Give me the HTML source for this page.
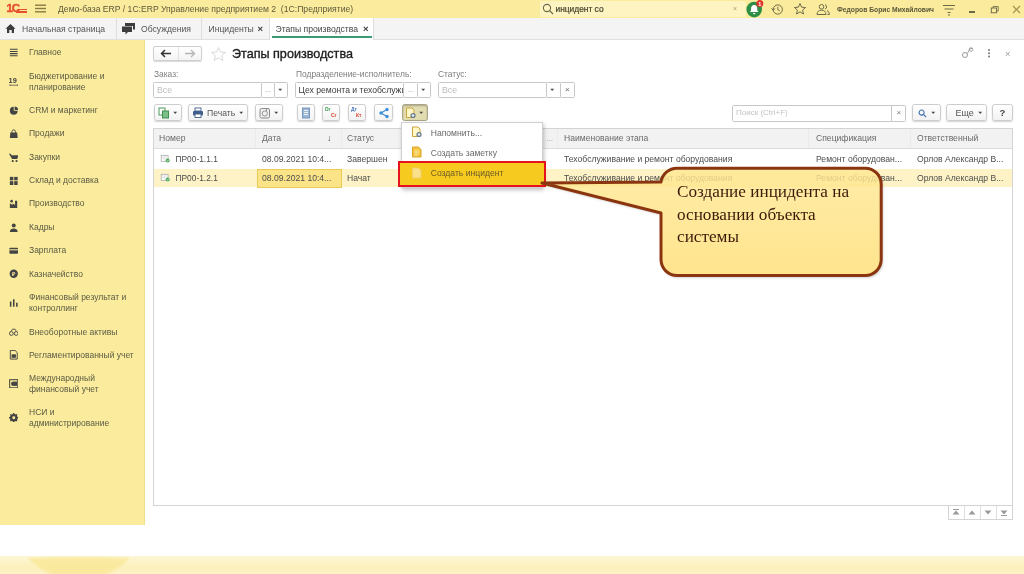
<!DOCTYPE html>
<html lang="ru">
<head>
<meta charset="utf-8">
<title>Этапы производства</title>
<style>
*{box-sizing:border-box;margin:0;padding:0}
html,body{width:1024px;height:574px;overflow:hidden;background:#fff}
body{position:relative;font-family:"Liberation Sans",sans-serif;font-size:9px;color:#4a4a4a;filter:blur(0.55px)}
.a{position:absolute;white-space:nowrap}
#titlebar{left:0;top:0;width:1024px;height:18px;background:#fbec9d}
#tabbar{left:0;top:18px;width:1024px;height:22px;background:#f4f4f4;border-bottom:1px solid #e0e0e0}
#sidebar{left:0;top:40px;width:145px;height:485px;background:#faec9c;border-right:1px solid #eedf8a}
#leftline{left:150px;top:40px;width:1px;height:484px;background:#e4e4e4}
#footer{left:0;top:555.5px;width:1024px;height:19px;background:linear-gradient(#fdf6d6,#fcf0bc 60%,#fdf3c8)}
.t{font-size:9px;color:#555}
.sb{font-size:8.5px;color:#5b5a45;line-height:11.2px;left:29px;margin-top:1.6px}
.ic{left:8.5px;width:9.5px;height:9.5px;margin-top:1.8px}
.btn{border:1px solid #cdcdcd;border-radius:2.5px;background:linear-gradient(#fff,#f3f3f3);box-shadow:0 1px 1.5px rgba(0,0,0,.18);height:17px;top:104px}
.inp{border:1px solid #c8c8c8;background:#fff;height:16.5px;top:81.5px;font-size:8.8px;line-height:14.5px;border-radius:1.5px;padding-left:3px;color:#bdbdbd}
.lbl{font-size:8.4px;color:#7d7d7d;top:69px}
.th{font-size:8.6px;color:#6a6a6a;top:133px}
.td{font-size:8.6px;color:#4d4d4d}
.sep{width:1px;background:#dedede}
.hs{background:#ebebeb}
.car{font-size:6.5px;color:#4a4a4a;line-height:6px;transform:scaleY(.62);margin-left:-1px}
</style>
</head>
<body>
<!-- title bar -->
<div class="a" id="titlebar"></div>
<div class="a" id="tabbar"></div>
<div class="a" id="sidebar"></div>
<div class="a" id="footer"></div>
<svg class="a" style="left:0;top:555.5px" width="260" height="19" viewBox="0 0 260 19"><defs><filter id="fb"><feGaussianBlur stdDeviation="1.2"/></filter></defs><path d="M28 2 Q78 0 130 2 Q118 14 104 19 L52 19 Q38 12 28 2Z" fill="#f9e68c" opacity=".65" filter="url(#fb)"/></svg>

<!-- logo -->
<div class="a" style="left:6.5px;top:1.5px;font-size:11.5px;font-weight:bold;color:#e5502f;letter-spacing:-1.2px;line-height:13px;-webkit-text-stroke:.5px #e5502f">1С</div>
<div class="a" style="left:17px;top:9.2px;width:9.5px;height:1.2px;background:#e5502f"></div>
<div class="a" style="left:16px;top:11.3px;width:10.5px;height:1.3px;background:#e5502f"></div>
<svg class="a" style="left:34.5px;top:3.5px" width="12" height="10" viewBox="0 0 12 10"><rect x="0" y=".5" width="11" height="1.4" fill="#857a42"/><rect x="0" y="3.8" width="11" height="1.4" fill="#857a42"/><rect x="0" y="7.1" width="11" height="1.4" fill="#857a42"/></svg>
<div class="a t" style="left:58px;top:3px;color:#5e5a3c;font-size:8.65px;line-height:12px">Демо-база ERP / 1С:ERP Управление предприятием 2&nbsp; (1С:Предприятие)</div>

<!-- title right -->
<div class="a" style="left:540px;top:1px;width:206px;height:16px;background:#fdf4c2;border-radius:2px"></div>
<svg class="a" style="left:541.5px;top:3px" width="12" height="12" viewBox="0 0 12 12"><circle cx="5" cy="5" r="3.6" fill="none" stroke="#6d6a4a" stroke-width="1.1"/><path d="M7.6 7.6L11 11" stroke="#6d6a4a" stroke-width="1.3"/></svg>
<div class="a" style="left:555.5px;top:3px;font-size:8.4px;line-height:12px;color:#45432e;-webkit-text-stroke:.2px #45432e">инцидент со</div>
<div class="a" style="left:733px;top:3px;font-size:7px;line-height:12px;color:#a59d6a">×</div>
<svg class="a" style="left:744px;top:0" width="24" height="19" viewBox="0 0 24 19"><circle cx="10.2" cy="9.6" r="7.8" fill="#2f8f46"/><path d="M10.2 5c-2.1 0-3.1 1.6-3.1 3.4v2.2l-1.2 1.5h8.6l-1.2-1.5v-2.2c0-1.8-1-3.4-3.1-3.4zM9 13a1.2 1.2 0 0 0 2.4 0z" fill="#fff"/><circle cx="15.8" cy="3.6" r="3.5" fill="#e0342b"/><text x="15.8" y="5.6" font-size="5.5" font-family="Liberation Sans, sans-serif" font-weight="bold" fill="#fff" text-anchor="middle">1</text></svg>
<svg class="a" style="left:771px;top:3px" width="13" height="13" viewBox="0 0 13 13"><circle cx="6.8" cy="6.5" r="4.6" fill="none" stroke="#6d6a4a" stroke-width="1"/><path d="M6.8 3.8V6.7L8.8 7.9" fill="none" stroke="#6d6a4a" stroke-width="1"/><path d="M0.6 5.2L2.2 7.4L4 5.4" fill="none" stroke="#6d6a4a" stroke-width="1"/></svg>
<svg class="a" style="left:793px;top:2px" width="14" height="14" viewBox="0 0 14 14"><path d="M7 1.5L8.6 5.2L12.6 5.5L9.6 8.1L10.5 12L7 9.9L3.5 12L4.4 8.1L1.4 5.5L5.4 5.2Z" fill="none" stroke="#6d6a4a" stroke-width="1" stroke-linejoin="round"/></svg>
<svg class="a" style="left:816px;top:3px" width="14" height="13" viewBox="0 0 14 13"><circle cx="5.5" cy="3.8" r="2.3" fill="none" stroke="#6d6a4a" stroke-width="1"/><path d="M1 11.5c0-3 2-4.3 4.5-4.3s4.5 1.3 4.5 4.3z" fill="none" stroke="#6d6a4a" stroke-width="1"/><path d="M9 1.6a2.3 2.3 0 0 1 0 4.4M11 7.6c1.5.6 2.3 1.9 2.3 3.9h-1.8" fill="none" stroke="#6d6a4a" stroke-width="1"/></svg>
<div class="a" style="left:837px;top:4px;font-size:6.75px;line-height:11px;color:#5a573a;font-weight:bold">Федоров Борис Михайлович</div>
<svg class="a" style="left:942px;top:3px" width="14" height="13" viewBox="0 0 14 13"><path d="M1 2.5H13M2.5 6H11.5M5.5 9.5H8.5" stroke="#6d6a4a" stroke-width="1.2"/><path d="M5.5 11.5L7 13L8.5 11.5z" fill="#6d6a4a"/></svg>
<div class="a" style="left:968.5px;top:11px;width:6.5px;height:1.5px;background:#6d6a4a"></div>
<svg class="a" style="left:989.5px;top:4.5px" width="9.5" height="9.5" viewBox="0 0 11 11"><rect x="1.5" y="3.5" width="6" height="5.5" fill="none" stroke="#6d6a4a" stroke-width="1.1"/><path d="M3.5 3.5V1.8H9.5V7H7.5" fill="none" stroke="#6d6a4a" stroke-width="1"/></svg>
<svg class="a" style="left:1011.5px;top:4.5px" width="9" height="9" viewBox="0 0 9 9"><path d="M1 1L8 8M8 1L1 8" stroke="#a08f4e" stroke-width="1.1"/></svg>

<!-- tab bar -->
<svg class="a" style="left:5px;top:23px" width="11" height="11" viewBox="0 0 11 11"><path d="M5.5 1L10.5 5.8H9V10H6.7V7H4.3V10H2V5.8H.5Z" fill="#3d3d3d"/></svg>
<div class="a" style="left:22px;top:23px;font-size:8.6px;line-height:12px;color:#555">Начальная страница</div>
<div class="a sep" style="left:116px;top:18px;height:21px"></div>
<svg class="a" style="left:121px;top:22px" width="15" height="13" viewBox="0 0 15 13"><path d="M4 1H14V7.5H12V4H4Z" fill="#3d3d3d"/><path d="M1 4.5H11V10H7L4.5 12.5V10H1Z" fill="#3d3d3d"/></svg>
<div class="a" style="left:141px;top:23px;font-size:8.6px;line-height:12px;color:#555">Обсуждения</div>
<div class="a sep" style="left:201px;top:18px;height:21px"></div>
<div class="a" style="left:208.5px;top:23px;font-size:8.6px;line-height:12px;color:#555">Инциденты</div>
<div class="a" style="left:257.5px;top:22.5px;font-size:9.5px;line-height:12px;color:#3a3a3a;font-weight:bold">×</div>
<div class="a" style="left:269px;top:18px;width:105px;height:22px;background:#fff;border-left:1px solid #dedede;border-right:1px solid #dedede"></div>
<div class="a" style="left:271.5px;top:36.3px;width:100px;height:1.7px;background:#3a9a74"></div>
<div class="a" style="left:275.5px;top:23px;font-size:8.6px;line-height:12px;color:#444">Этапы производства</div>
<div class="a" style="left:363px;top:22.5px;font-size:9.5px;line-height:12px;color:#3a3a3a;font-weight:bold">×</div>

<!-- sidebar -->
<svg class="a ic" style="top:46px" viewBox="0 0 11 11"><path d="M1 1.5H10M1 4H10M1 6.5H10M1 9H10" stroke="#444" stroke-width="1.3"/></svg>
<div class="a sb" style="top:45.8px">Главное</div>
<svg class="a ic" style="top:75px" viewBox="0 0 11 11"><text x="-0.5" y="7.5" font-size="8.5" font-weight="bold" font-family="Liberation Sans, sans-serif" fill="#444">19</text><path d="M1 9.5H10M1 8.5V10.5M10 8.5V10.5" stroke="#444" stroke-width=".8"/></svg>
<div class="a sb" style="top:69.0px">Бюджетирование и<br>планирование</div>
<svg class="a ic" style="top:104px" viewBox="0 0 11 11"><path d="M5.5 1A4.5 4.5 0 1 0 10 5.5H5.5Z" fill="#444"/><path d="M6.5 0.5A4 4 0 0 1 10.5 4.5H6.5Z" fill="#444"/></svg>
<div class="a sb" style="top:103.8px">CRM и маркетинг</div>
<svg class="a ic" style="top:127px" viewBox="0 0 11 11"><path d="M1.5 4H9.5L10 10.5H1Z" fill="#444"/><path d="M3.5 4.5V3A2 2 0 0 1 7.5 3V4.5" fill="none" stroke="#444" stroke-width="1"/></svg>
<div class="a sb" style="top:126.8px">Продажи</div>
<svg class="a ic" style="top:151px" viewBox="0 0 11 11"><path d="M0 1H2L3 2.5H11L9.5 7H3.5Z" fill="#444"/><circle cx="4.3" cy="9.3" r="1.2" fill="#444"/><circle cx="8.7" cy="9.3" r="1.2" fill="#444"/></svg>
<div class="a sb" style="top:150.8px">Закупки</div>
<svg class="a ic" style="top:174px" viewBox="0 0 11 11"><rect x="1" y="1" width="4" height="4" fill="#444"/><rect x="6" y="1" width="4" height="4" fill="#444"/><rect x="1" y="6" width="4" height="4.5" fill="#444"/><rect x="6" y="6" width="4" height="4.5" fill="#444"/></svg>
<div class="a sb" style="top:173.8px">Склад и доставка</div>
<svg class="a ic" style="top:197px" viewBox="0 0 11 11"><path d="M1 10.5V5L4 7V5L7 7V2H9.5V10.5Z" fill="#444"/><circle cx="3" cy="2.5" r="1.5" fill="#444"/></svg>
<div class="a sb" style="top:196.8px">Производство</div>
<svg class="a ic" style="top:221px" viewBox="0 0 11 11"><circle cx="5.5" cy="3" r="2.3" fill="#444"/><path d="M1 10.5C1 7.5 3 6.5 5.5 6.5S10 7.5 10 10.5Z" fill="#444"/></svg>
<div class="a sb" style="top:220.8px">Кадры</div>
<svg class="a ic" style="top:244px" viewBox="0 0 11 11"><rect x="0.5" y="2" width="10" height="7" rx="1" fill="#444"/><rect x="0.5" y="3.8" width="10" height="1.2" fill="#faec9c"/></svg>
<div class="a sb" style="top:243.8px">Зарплата</div>
<svg class="a ic" style="top:267.5px" viewBox="0 0 11 11"><circle cx="5.5" cy="5.5" r="4.8" fill="#444"/><text x="5.5" y="8" font-size="6.5" font-weight="bold" text-anchor="middle" font-family="Liberation Sans, sans-serif" fill="#faec9c">₽</text></svg>
<div class="a sb" style="top:267.3px">Казначейство</div>
<svg class="a ic" style="top:296px" viewBox="0 0 11 11"><path d="M1 10V4H2.8V10ZM4.6 10V1.5H6.4V10ZM8.2 10V5.5H10V10Z" fill="#444"/></svg>
<div class="a sb" style="top:290.0px">Финансовый результат и<br>контроллинг</div>
<svg class="a ic" style="top:325.5px" viewBox="0 0 11 11"><circle cx="2.7" cy="7.5" r="2.2" fill="none" stroke="#444" stroke-width="1.1"/><circle cx="8.3" cy="7.5" r="2.2" fill="none" stroke="#444" stroke-width="1.1"/><path d="M2.5 5L4 2.5H7L8.5 5" fill="none" stroke="#444" stroke-width="1"/></svg>
<div class="a sb" style="top:325.3px">Внеоборотные активы</div>
<svg class="a ic" style="top:348.5px" viewBox="0 0 11 11"><path d="M1.5 0.5H7L9.5 3V10.5H1.5Z" fill="none" stroke="#444" stroke-width="1.1"/><rect x="3" y="5" width="5" height="4" fill="#444"/></svg>
<div class="a sb" style="top:348.3px">Регламентированный учет</div>
<svg class="a ic" style="top:377px" viewBox="0 0 11 11"><rect x="0.8" y="0.8" width="9.4" height="9.4" fill="none" stroke="#444" stroke-width="1.2"/><circle cx="5" cy="5.5" r="2.6" fill="#444"/><path d="M6 3H9.5V8H6" fill="#444"/></svg>
<div class="a sb" style="top:371.0px">Международный<br>финансовый учет</div>
<svg class="a ic" style="top:411px" viewBox="0 0 11 11"><circle cx="5.5" cy="5.5" r="3.3" fill="none" stroke="#444" stroke-width="2.2"/><path d="M5.5 0V11M0 5.5H11M1.6 1.6L9.4 9.4M9.4 1.6L1.6 9.4" stroke="#444" stroke-width="1.6"/><circle cx="5.5" cy="5.5" r="1.7" fill="#faec9c"/></svg>
<div class="a sb" style="top:405.0px">НСИ и<br>администрирование</div>

<!-- form header -->
<div class="a" style="left:153px;top:45.5px;width:49px;height:15.5px;border:1px solid #cfcfcf;border-radius:2px;background:linear-gradient(#fff,#f4f4f4);box-shadow:0 1px 1px rgba(0,0,0,.15)"></div>
<div class="a" style="left:178px;top:47px;width:1px;height:13px;background:#e2e2e2"></div>
<svg class="a" style="left:160px;top:49px" width="12" height="9" viewBox="0 0 12 9"><path d="M11 4.5H2M5 1L1.5 4.5L5 8" fill="none" stroke="#333" stroke-width="1.5"/></svg>
<svg class="a" style="left:184px;top:49px" width="12" height="9" viewBox="0 0 12 9"><path d="M1 4.5H10M7 1L10.5 4.5L7 8" fill="none" stroke="#b5b5b5" stroke-width="1.3"/></svg>
<svg class="a" style="left:209.5px;top:45.5px" width="17" height="16" viewBox="0 0 17 16"><path d="M8.5 1.5L10.5 6L15.5 6.4L11.7 9.6L12.9 14.5L8.5 11.9L4.1 14.5L5.3 9.6L1.5 6.4L6.5 6Z" fill="none" stroke="#d9d9d9" stroke-width="1" stroke-linejoin="round"/></svg>
<div class="a" id="ttl" style="left:232px;top:44.8px;font-size:12.6px;line-height:18px;color:#1c1c1c;-webkit-text-stroke:.35px #1c1c1c">Этапы производства</div>
<svg class="a" style="left:961px;top:46px" width="13" height="13" viewBox="0 0 13 13"><circle cx="4" cy="9" r="2.5" fill="none" stroke="#999" stroke-width="1"/><path d="M6 7.5C8 6 8 2 11 2.5" fill="none" stroke="#999" stroke-width="1"/><circle cx="10" cy="3.5" r="1.8" fill="none" stroke="#999" stroke-width=".9"/></svg>
<div class="a" style="left:987.5px;top:49px;width:2px;height:2px;background:#777;box-shadow:0 3.3px 0 #777,0 6.6px 0 #777;border-radius:1px"></div>
<div class="a" style="left:1005px;top:47.5px;font-size:9.5px;line-height:12px;color:#999">×</div>

<!-- filters -->
<div class="a lbl" style="left:154px">Заказ:</div>
<div class="a lbl" style="left:296px">Подразделение-исполнитель:</div>
<div class="a lbl" style="left:438px">Статус:</div>
<div class="a inp" style="left:153px;width:109px">Все</div>
<div class="a inp" style="left:261px;width:14px;color:#999;padding-left:3px;font-size:7px">...</div>
<div class="a inp" style="left:274px;width:14px"></div>
<div class="a car" style="left:278px;top:87px">▼</div>
<div class="a inp" style="left:295px;width:109px;color:#3c3c3c;overflow:hidden;font-size:8.65px;padding-left:2.5px">Цех ремонта и техобслуживания</div>
<div class="a inp" style="left:403px;width:15px;color:#999;padding-left:4px;font-size:7px">...</div>
<div class="a inp" style="left:417px;width:14px"></div>
<div class="a car" style="left:421px;top:87px">▼</div>
<div class="a inp" style="left:438px;width:108.5px">Все</div>
<div class="a inp" style="left:545.5px;width:15px"></div>
<div class="a car" style="left:550px;top:87px">▼</div>
<div class="a inp" style="left:559.5px;width:15px;color:#666;padding-left:4.5px;font-size:8px">×</div>

<!-- toolbar -->
<div class="a btn" style="left:154px;width:27.5px"></div>
<svg class="a" style="left:158px;top:107px" width="12" height="12" viewBox="0 0 12 12"><rect x="1" y="1" width="6" height="7" fill="#fff" stroke="#4d9a5a" stroke-width="1"/><rect x="4.5" y="4" width="6" height="7" fill="#7cc089" stroke="#3f8f4e" stroke-width="1"/></svg>
<div class="a car" style="left:173px;top:110px">▼</div>
<div class="a btn" style="left:187.5px;width:60.5px"></div>
<svg class="a" style="left:192px;top:107px" width="12" height="12" viewBox="0 0 12 12"><rect x="3" y="1" width="6" height="3" fill="#fff" stroke="#44618c" stroke-width=".9"/><rect x="1" y="4" width="10" height="4.5" rx="1" fill="#3f5f8f"/><rect x="3" y="7" width="6" height="3.5" fill="#fff" stroke="#44618c" stroke-width=".9"/></svg>
<div class="a" style="left:207px;top:107px;font-size:8.6px;line-height:12px;color:#555">Печать</div>
<div class="a car" style="left:239px;top:110px">▼</div>
<div class="a btn" style="left:254.5px;width:28.5px"></div>
<svg class="a" style="left:259px;top:107px" width="12" height="12" viewBox="0 0 12 12"><rect x="1" y="1.5" width="9.5" height="9.5" rx="1.5" fill="#f0f0f0" stroke="#8a8a8a" stroke-width="1"/><circle cx="5.8" cy="6.5" r="2.6" fill="none" stroke="#8a8a8a" stroke-width=".9"/><path d="M7.5 1.5V4" stroke="#8a8a8a" stroke-width=".9"/></svg>
<div class="a car" style="left:274px;top:110px">▼</div>
<div class="a btn" style="left:297px;width:18px"></div>
<svg class="a" style="left:301px;top:107px" width="10" height="12" viewBox="0 0 10 12"><rect x="1.5" y="1" width="7" height="10" fill="#9db7d6" stroke="#6d8fb8" stroke-width=".9"/><path d="M3 3.5H7M3 5.5H7M3 7.5H7" stroke="#fff" stroke-width=".8"/></svg>
<div class="a btn" style="left:322px;width:18px"></div>
<div class="a" style="left:325px;top:106px;font-size:5px;line-height:6px;color:#3d9a50;font-weight:bold">Dr</div>
<div class="a" style="left:331px;top:112px;font-size:5px;line-height:6px;color:#d8452e;font-weight:bold">Cr</div>
<div class="a btn" style="left:348px;width:18px"></div>
<div class="a" style="left:351px;top:106px;font-size:5px;line-height:6px;color:#4b77b8;font-weight:bold">Дт</div>
<div class="a" style="left:356px;top:112px;font-size:5px;line-height:6px;color:#d8452e;font-weight:bold">Кт</div>
<div class="a btn" style="left:374px;width:19px"></div>
<svg class="a" style="left:378px;top:107px" width="12" height="12" viewBox="0 0 12 12"><path d="M9 2.5L3 6L9 9.5" fill="none" stroke="#3d8fd6" stroke-width="1.2"/><circle cx="9" cy="2.5" r="1.7" fill="#3d8fd6"/><circle cx="3" cy="6" r="1.7" fill="#3d8fd6"/><circle cx="9" cy="9.5" r="1.7" fill="#3d8fd6"/></svg>
<div class="a btn" style="left:401.5px;width:26px;background:#e3ddb2;border-color:#aaa486;box-shadow:inset 0 1px 2px rgba(0,0,0,.25)"></div>
<svg class="a" style="left:404.5px;top:107px" width="12" height="12" viewBox="0 0 12 12"><path d="M1.5 1H7L9 3V10.5H1.5Z" fill="#fff7c8" stroke="#c9a53a" stroke-width="1"/><circle cx="8" cy="8.5" r="2.6" fill="#6b7c8f"/><circle cx="8" cy="8.5" r="1.3" fill="#e8eef5"/></svg>
<div class="a car" style="left:419px;top:110px">▼</div>

<div class="a" style="left:732px;top:104.5px;width:160px;height:17px;border:1px solid #c8c8c8;border-radius:1.5px 0 0 1.5px;background:#fff;font-size:8px;line-height:14px;padding-left:3px;color:#c4c4c4">Поиск (Ctrl+F)</div>
<div class="a" style="left:891px;top:104.5px;width:15px;height:17px;border:1px solid #c8c8c8;border-radius:0 1.5px 1.5px 0;background:#fff;font-size:8px;line-height:14px;padding-left:4.5px;color:#777">×</div>
<div class="a btn" style="left:912px;width:28.5px"></div>
<svg class="a" style="left:917.5px;top:108.5px" width="9" height="9" viewBox="0 0 10 10"><circle cx="4" cy="4" r="2.8" fill="none" stroke="#3c6fae" stroke-width="1.2"/><path d="M6 6L9 9" stroke="#3c6fae" stroke-width="1.4"/></svg>
<div class="a car" style="left:931px;top:110px">▼</div>
<div class="a btn" style="left:945.5px;width:41.5px"></div>
<div class="a" style="left:955.5px;top:107px;font-size:9px;line-height:12px;color:#555">Еще</div>
<div class="a car" style="left:978px;top:110px">▼</div>
<div class="a btn" style="left:992px;width:20.5px"></div>
<div class="a" style="left:999.5px;top:106px;font-size:9.5px;line-height:13px;color:#444;font-weight:bold">?</div>

<!-- table -->
<div class="a" style="left:153px;top:128px;width:860px;height:378px;border:1px solid #d4d4d4;background:#fff"></div>
<div class="a" style="left:154px;top:129px;width:858px;height:20px;background:#f2f2f2;border-bottom:1px solid #dcdcdc"></div>
<div class="a" style="left:154px;top:168.7px;width:858px;height:18.8px;background:#fdf3c6"></div>
<div class="a" style="left:256.5px;top:168.7px;width:85.5px;height:19px;background:#fbe388;border:1px solid #eccb55"></div>
<div class="a sep hs" style="left:255px;top:129px;height:19px"></div>
<div class="a sep hs" style="left:341px;top:129px;height:19px"></div>
<div class="a sep hs" style="left:557px;top:129px;height:19px"></div>
<div class="a sep hs" style="left:808px;top:129px;height:19px"></div>
<div class="a sep hs" style="left:910px;top:129px;height:19px"></div>
<div class="a th" style="left:159px">Номер</div>
<div class="a th" style="left:262px">Дата</div>
<div class="a th" style="left:327px;color:#333;font-size:8.5px;font-weight:bold">↓</div>
<div class="a th" style="left:347px">Статус</div>
<div class="a th" style="left:564px">Наименование этапа</div>
<div class="a th" style="left:816px">Спецификация</div>
<div class="a th" style="left:917px">Ответственный</div>
<div class="a th" style="left:546px;color:#aaa">...</div>
<svg class="a" style="left:159.5px;top:154px" width="11" height="9.5" viewBox="0 0 12 11"><rect x="1" y="1.5" width="8" height="7" fill="#fff" stroke="#a9a9a9" stroke-width=".9"/><path d="M2.5 3.5H7.5M2.5 5.5H6" stroke="#c4c4c4" stroke-width=".8"/><circle cx="8.5" cy="7.5" r="2.4" fill="#4aa85c"/><path d="M7.3 7.5L8.3 8.5L9.8 6.7" fill="none" stroke="#fff" stroke-width=".8"/></svg>
<div class="a td" style="left:175.5px;font-size:8.4px;top:153.5px">ПР00-1.1.1</div>
<div class="a td" style="left:262px;top:153.5px">08.09.2021 10:4...</div>
<div class="a td" style="left:347px;top:153.5px">Завершен</div>
<div class="a td" style="left:564px;top:153.5px">Техобслуживание и ремонт оборудования</div>
<div class="a td" style="left:816px;top:153.5px">Ремонт оборудован...</div>
<div class="a td" style="left:917px;top:153.5px">Орлов Александр В...</div>
<svg class="a" style="left:159.5px;top:173px" width="11" height="9.5" viewBox="0 0 12 11"><rect x="1" y="1.5" width="8" height="7" fill="#fff" stroke="#a9a9a9" stroke-width=".9"/><path d="M2.5 3.5H7.5M2.5 5.5H6" stroke="#c4c4c4" stroke-width=".8"/><circle cx="8.5" cy="7.5" r="2.4" fill="#4aa85c"/><path d="M7.3 7.5L8.3 8.5L9.8 6.7" fill="none" stroke="#fff" stroke-width=".8"/></svg>
<div class="a td" style="left:175.5px;font-size:8.4px;top:172.6px">ПР00-1.2.1</div>
<div class="a td" style="left:262px;top:172.6px">08.09.2021 10:4...</div>
<div class="a td" style="left:347px;top:172.6px">Начат</div>
<div class="a td" style="left:564px;top:172.6px">Техобслуживание и ремонт оборудования</div>
<div class="a td" style="left:816px;top:172.6px">Ремонт оборудован...</div>
<div class="a td" style="left:917px;top:172.6px">Орлов Александр В...</div>

<!-- scroll buttons -->
<div class="a" style="left:948px;top:505px;width:65px;height:15px;border:1px solid #d4d4d4;background:#fff"></div>
<div class="a sep" style="left:964px;top:506px;height:13px"></div>
<div class="a sep" style="left:980px;top:506px;height:13px"></div>
<div class="a sep" style="left:996px;top:506px;height:13px"></div>
<svg class="a" style="left:948px;top:505px" width="65" height="15" viewBox="0 0 65 15"><g fill="#9a9a9a"><path d="M4.5 9.5L8 5.5L11.5 9.5Z"/><rect x="5" y="4" width="6" height="1"/><path d="M20.5 9.5L24 5.5L27.5 9.5Z"/><path d="M36.5 5.5L40 9.5L43.5 5.5Z"/><path d="M52.5 5.5L56 9.5L59.5 5.5Z"/><rect x="53" y="10" width="6" height="1"/></g></svg>

<!-- popup menu -->
<div class="a" style="left:400.5px;top:121.5px;width:142.5px;height:66px;background:#fff;border:1px solid #d0d0d0;box-shadow:1px 2px 4px rgba(0,0,0,.25)"></div>
<div class="a" style="left:399.5px;top:162.5px;width:144.5px;height:22.5px;background:#f7ca20"></div>
<svg class="a" style="left:411px;top:126px" width="12" height="12" viewBox="0 0 12 12"><path d="M1.5 1H7L9 3V10.5H1.5Z" fill="#fff7c8" stroke="#c9a53a" stroke-width="1"/><circle cx="8" cy="8.5" r="2.6" fill="#6b7c8f"/><circle cx="8" cy="8.5" r="1.3" fill="#e8eef5"/></svg>
<svg class="a" style="left:411px;top:146px" width="12" height="12" viewBox="0 0 12 12"><path d="M1.5 1H7.5L10 3.5V11H1.5Z" fill="#f6c544" stroke="#d9a21e" stroke-width="1"/><path d="M3.5 5H8M3.5 7H8M3.5 9H6.5" stroke="#fff3c4" stroke-width=".8"/></svg>
<svg class="a" style="left:411px;top:167px" width="12" height="12" viewBox="0 0 12 12"><path d="M1.5 1H7.5L10 3.5V11H1.5Z" fill="#fbe08a" stroke="#f0cf6a" stroke-width="1"/></svg>
<div class="a" style="left:430.7px;top:126.6px;font-size:8.6px;line-height:12px;color:#6a6a6a">Напомнить...</div>
<div class="a" style="left:430.7px;top:146.6px;font-size:8.6px;line-height:12px;color:#6a6a6a">Создать заметку</div>
<div class="a" style="left:430.7px;top:166.6px;font-size:8.6px;line-height:12px;color:#6b5a28">Создать инцидент</div>
<div class="a" style="left:398px;top:161px;width:147.5px;height:25.5px;border:2px solid #e5141c"></div>

<!-- callout -->
<svg class="a" style="left:520px;top:150px" width="380" height="140" viewBox="520 150 380 140">
<defs>
<linearGradient id="cg" x1="0" y1="0" x2="0" y2="1"><stop offset="0" stop-color="#ffe894"/><stop offset="1" stop-color="#ffde74"/></linearGradient>
<filter id="sh" x="-10%" y="-10%" width="130%" height="130%"><feGaussianBlur stdDeviation="1.5"/></filter>
</defs>
<mask id="mk" maskUnits="userSpaceOnUse" x="520" y="150" width="380" height="140"><rect x="520" y="150" width="380" height="140" fill="#fff"/><path d="M542 183 L661 182 A16 16 0 0 1 677 168.2 L865.2 168.2 A16 16 0 0 1 881.2 184.2 L881.2 259.6 A16 16 0 0 1 865.2 275.6 L677 275.6 A16 16 0 0 1 661 259.6 L661 213 Z" fill="#000"/></mask>
<g mask="url(#mk)"><path d="M542 183 L661 182 A16 16 0 0 1 677 168.2 L865.2 168.2 A16 16 0 0 1 881.2 184.2 L881.2 259.6 A16 16 0 0 1 865.2 275.6 L677 275.6 A16 16 0 0 1 661 259.6 L661 213 Z" fill="#000" opacity=".22" transform="translate(1.5,2)" filter="url(#sh)"/></g>
<path d="M542 183 L661 182 A16 16 0 0 1 677 168.2 L865.2 168.2 A16 16 0 0 1 881.2 184.2 L881.2 259.6 A16 16 0 0 1 865.2 275.6 L677 275.6 A16 16 0 0 1 661 259.6 L661 213 Z" fill="url(#cg)" fill-opacity=".82" stroke="#8a3510" stroke-width="3" stroke-linejoin="round"/>
</svg>
<div class="a" style="left:677px;top:181px;font-family:'Liberation Serif',serif;font-size:17.2px;line-height:22.6px;color:#3a1c0a;white-space:normal;width:190px">Создание инцидента на основании объекта системы</div>

</body>
</html>
